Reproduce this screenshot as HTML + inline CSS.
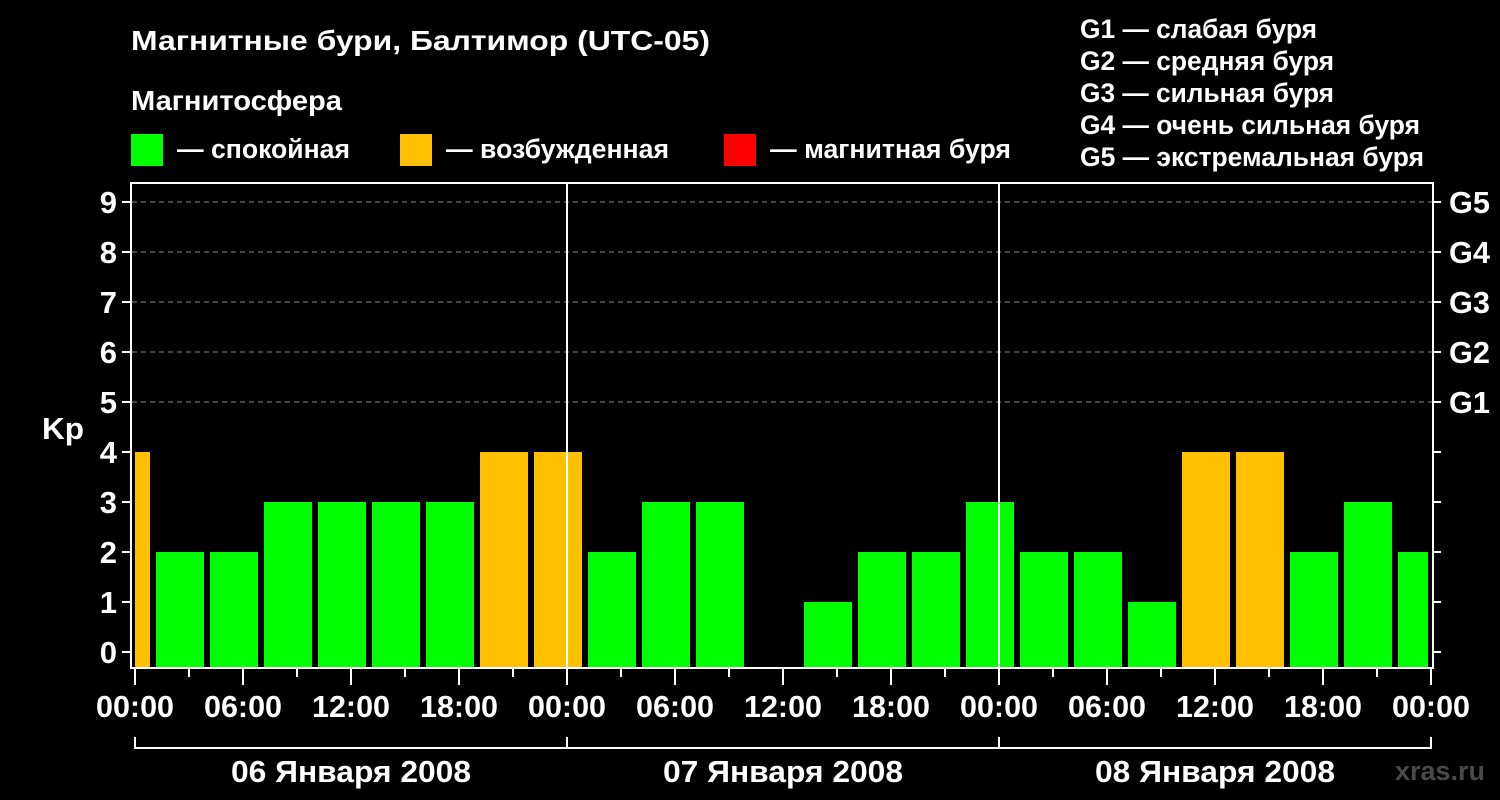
<!DOCTYPE html>
<html><head><meta charset="utf-8"><style>
html,body{margin:0;padding:0;background:#000;}
svg{display:block}
text{font-family:"Liberation Sans",Arial,sans-serif;font-weight:bold;fill:#fff}
</style></head><body>
<svg width="1500" height="800" viewBox="0 0 1500 800" xmlns="http://www.w3.org/2000/svg">
<rect width="1500" height="800" fill="#000"/>
<text x="131" y="50" font-size="28" textLength="579" lengthAdjust="spacingAndGlyphs">Магнитные бури, Балтимор (UTC-05)</text>
<text x="131" y="110" font-size="28" textLength="211" lengthAdjust="spacingAndGlyphs">Магнитосфера</text>
<rect x="131" y="134" width="32" height="32" fill="#00ff00"/>
<text x="177" y="158" font-size="27" textLength="173" lengthAdjust="spacingAndGlyphs">— спокойная</text>
<rect x="400" y="134" width="32" height="32" fill="#ffc000"/>
<text x="446" y="158" font-size="27" textLength="223" lengthAdjust="spacingAndGlyphs">— возбужденная</text>
<rect x="724" y="134" width="32" height="32" fill="#ff0000"/>
<text x="770" y="158" font-size="27" textLength="241" lengthAdjust="spacingAndGlyphs">— магнитная буря</text>
<g font-size="27">
<text x="1080" y="38" textLength="237" lengthAdjust="spacingAndGlyphs">G1 — слабая буря</text>
<text x="1080" y="70" textLength="254" lengthAdjust="spacingAndGlyphs">G2 — средняя буря</text>
<text x="1080" y="102" textLength="254" lengthAdjust="spacingAndGlyphs">G3 — сильная буря</text>
<text x="1080" y="134" textLength="340" lengthAdjust="spacingAndGlyphs">G4 — очень сильная буря</text>
<text x="1080" y="166" textLength="344" lengthAdjust="spacingAndGlyphs">G5 — экстремальная буря</text>
</g>
<g stroke="#888" stroke-width="1" stroke-dasharray="5,4">
<line x1="132" y1="202" x2="1432" y2="202"/>
<line x1="132" y1="252" x2="1432" y2="252"/>
<line x1="132" y1="302" x2="1432" y2="302"/>
<line x1="132" y1="352" x2="1432" y2="352"/>
<line x1="132" y1="402" x2="1432" y2="402"/>
</g>
<g id="bars">
<rect x="135" y="452" width="15" height="216" fill="#ffc000"/>
<rect x="156" y="552" width="48" height="116" fill="#00ff00"/>
<rect x="210" y="552" width="48" height="116" fill="#00ff00"/>
<rect x="264" y="502" width="48" height="166" fill="#00ff00"/>
<rect x="318" y="502" width="48" height="166" fill="#00ff00"/>
<rect x="372" y="502" width="48" height="166" fill="#00ff00"/>
<rect x="426" y="502" width="48" height="166" fill="#00ff00"/>
<rect x="480" y="452" width="48" height="216" fill="#ffc000"/>
<rect x="534" y="452" width="48" height="216" fill="#ffc000"/>
<rect x="588" y="552" width="48" height="116" fill="#00ff00"/>
<rect x="642" y="502" width="48" height="166" fill="#00ff00"/>
<rect x="696" y="502" width="48" height="166" fill="#00ff00"/>
<rect x="804" y="602" width="48" height="66" fill="#00ff00"/>
<rect x="858" y="552" width="48" height="116" fill="#00ff00"/>
<rect x="912" y="552" width="48" height="116" fill="#00ff00"/>
<rect x="966" y="502" width="48" height="166" fill="#00ff00"/>
<rect x="1020" y="552" width="48" height="116" fill="#00ff00"/>
<rect x="1074" y="552" width="48" height="116" fill="#00ff00"/>
<rect x="1128" y="602" width="48" height="66" fill="#00ff00"/>
<rect x="1182" y="452" width="48" height="216" fill="#ffc000"/>
<rect x="1236" y="452" width="48" height="216" fill="#ffc000"/>
<rect x="1290" y="552" width="48" height="116" fill="#00ff00"/>
<rect x="1344" y="502" width="48" height="166" fill="#00ff00"/>
<rect x="1398" y="552" width="30" height="116" fill="#00ff00"/>
</g>
<g stroke="#fff" stroke-width="2" fill="none">
<rect x="131" y="183" width="1302" height="485"/>
<line x1="567" y1="183" x2="567" y2="668"/>
<line x1="999" y1="183" x2="999" y2="668"/>
<path d="M122 202H131M122 252H131M122 302H131M122 352H131M122 402H131M122 452H131M122 502H131M122 552H131M122 602H131M122 652H131"/>
<path d="M1433 202H1441M1433 252H1441M1433 302H1441M1433 352H1441M1433 402H1441M1433 452H1441M1433 502H1441M1433 552H1441M1433 602H1441M1433 652H1441"/>
<path d="M135 668V685M243 668V685M351 668V685M459 668V685M567 668V685M675 668V685M783 668V685M891 668V685M999 668V685M1107 668V685M1215 668V685M1323 668V685M1431 668V685"/>
<path d="M189 668V677M297 668V677M405 668V677M513 668V677M621 668V677M729 668V677M837 668V677M945 668V677M1053 668V677M1161 668V677M1269 668V677M1377 668V677"/>
<path d="M135 737V748H1431V737M567 737V748M999 737V748"/>
</g>
<g font-size="31" text-anchor="end">
<text x="117" y="213">9</text><text x="117" y="263">8</text><text x="117" y="313">7</text><text x="117" y="363">6</text><text x="117" y="413">5</text><text x="117" y="463">4</text><text x="117" y="513">3</text><text x="117" y="563">2</text><text x="117" y="613">1</text><text x="117" y="663">0</text>
</g>
<text x="42" y="439" font-size="31" textLength="42" lengthAdjust="spacingAndGlyphs">Kp</text>
<g font-size="31">
<text x="1449" y="213" textLength="41" lengthAdjust="spacingAndGlyphs">G5</text><text x="1449" y="263" textLength="41" lengthAdjust="spacingAndGlyphs">G4</text><text x="1449" y="313" textLength="41" lengthAdjust="spacingAndGlyphs">G3</text><text x="1449" y="363" textLength="41" lengthAdjust="spacingAndGlyphs">G2</text><text x="1449" y="413" textLength="41" lengthAdjust="spacingAndGlyphs">G1</text>
</g>
<g font-size="31">
<text x="96" y="717" textLength="78" lengthAdjust="spacingAndGlyphs">00:00</text>
<text x="204" y="717" textLength="78" lengthAdjust="spacingAndGlyphs">06:00</text>
<text x="312" y="717" textLength="78" lengthAdjust="spacingAndGlyphs">12:00</text>
<text x="420" y="717" textLength="78" lengthAdjust="spacingAndGlyphs">18:00</text>
<text x="528" y="717" textLength="78" lengthAdjust="spacingAndGlyphs">00:00</text>
<text x="636" y="717" textLength="78" lengthAdjust="spacingAndGlyphs">06:00</text>
<text x="744" y="717" textLength="78" lengthAdjust="spacingAndGlyphs">12:00</text>
<text x="852" y="717" textLength="78" lengthAdjust="spacingAndGlyphs">18:00</text>
<text x="960" y="717" textLength="78" lengthAdjust="spacingAndGlyphs">00:00</text>
<text x="1068" y="717" textLength="78" lengthAdjust="spacingAndGlyphs">06:00</text>
<text x="1176" y="717" textLength="78" lengthAdjust="spacingAndGlyphs">12:00</text>
<text x="1284" y="717" textLength="78" lengthAdjust="spacingAndGlyphs">18:00</text>
<text x="1392" y="717" textLength="78" lengthAdjust="spacingAndGlyphs">00:00</text>
<text x="231" y="782" textLength="240" lengthAdjust="spacingAndGlyphs">06 Января 2008</text>
<text x="663" y="782" textLength="240" lengthAdjust="spacingAndGlyphs">07 Января 2008</text>
<text x="1095" y="782" textLength="240" lengthAdjust="spacingAndGlyphs">08 Января 2008</text>
</g>
<text x="1395" y="780" font-size="27" textLength="90" lengthAdjust="spacingAndGlyphs" style="fill:#4a4a4a">xras.ru</text>
</svg>
</body></html>
